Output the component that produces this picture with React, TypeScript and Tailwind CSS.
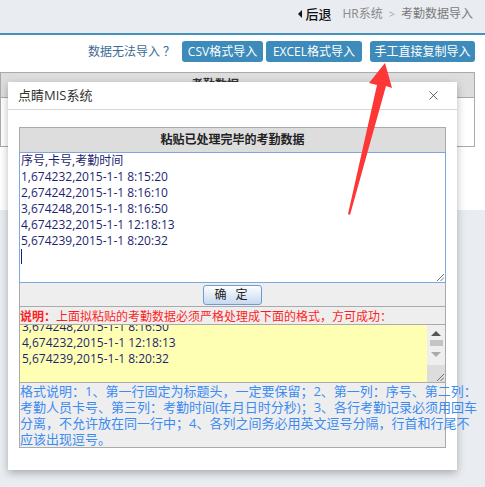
import { X } from 'lucide-react'

const font = { fontFamily: "'Open Sans', 'Noto Sans CJK SC', sans-serif" }

const pasted = [
  '序号,卡号,考勤时间',
  '1,674232,2015-1-1 8:15:20',
  '2,674242,2015-1-1 8:16:10',
  '3,674248,2015-1-1 8:16:50',
  '4,674232,2015-1-1 12:18:13',
  '5,674239,2015-1-1 8:20:32',
]

const sample = ['3,674248,2015-1-1 8:16:50', '4,674232,2015-1-1 12:18:13', '5,674239,2015-1-1 8:20:32']

const notes = [
  '格式说明：1、第一行固定为标题头，一定要保留；2、第一列：序号、第二列：',
  '考勤人员卡号、第三列：考勤时间(年月日时分秒)；3、各行考勤记录必须用回车',
  '分离，不允许放在同一行中；4、各列之间务必用英文逗号分隔，行首和行尾不',
  '应该出现逗号。',
]

function Grip() {
  return (
    <svg width="8" height="8" viewBox="0 0 8 8" className="absolute right-[1px] bottom-[1px]">
      <path d="M1 8 L8 1 M4.5 8 L8 4.5" stroke="#555" strokeWidth="0.8" />
    </svg>
  )
}

function ImportDialog() {
  return (
    <div className="absolute left-[8px] top-[82px] w-[449px] h-[388px] bg-white shadow-[0_3px_8px_rgba(0,0,0,0.28)]">
      {/* Title */}
      <div className="h-[28px] flex items-center justify-between pl-[10px] pr-[16px] border-b border-[#d6d6d6]">
        <span className="text-[13px] text-[#333]">点睛MIS系统</span>
        <X className="w-[15px] h-[15px] text-[#333]" strokeWidth={1.2} />
      </div>

      <div className="mt-[17px] ml-[11px] w-[427px] border border-[#aaa] bg-[#eee]">
        <div className="h-[24px] bg-[#ddd] flex items-center justify-center text-[12px] font-bold text-[#222]">
          粘贴已处理完毕的考勤数据
        </div>

        {/* Paste area */}
        <div className="relative -mx-px h-[131px] bg-white border border-[#7ea6e2] text-[12px] leading-[16px] text-[#1e1f70] pl-px">
          {pasted.map((l) => (
            <div key={l} className="whitespace-nowrap">{l}</div>
          ))}
          <div className="w-px h-[15px] bg-[#1e1f70]" />
          <Grip />
        </div>

        <div className="h-[24px] flex items-center justify-center border-b border-[#aaa]">
          <button className="w-[59px] h-[20px] rounded-[3px] border border-[#6f9ccf] bg-gradient-to-b from-[#fdfdfd] to-[#c6daf0] text-[12px] text-[#222] tracking-[3px]">
            确 定
          </button>
        </div>

        <div className="h-[17px] pt-[2px] text-[12px] leading-[15px] text-[#ff1e1e] whitespace-nowrap">
          <span className="font-bold">说明：</span>上面拟粘贴的考勤数据必须严格处理成下面的格式，方可成功：
        </div>

        {/* Sample area */}
        <div className="h-[59px] flex border-y border-[#aaa] overflow-hidden">
          <div className="flex-1 bg-[#ffffb4] text-[12px] leading-[16px] text-[#1e1f70] pl-[2px] overflow-hidden">
            <div className="-mt-[6px]">
              {sample.map((l) => (
                <div key={l} className="whitespace-nowrap">{l}</div>
              ))}
            </div>
          </div>
          <div className="relative w-[18px] bg-[#efefef] flex flex-col items-center pt-[6px]">
            <div className="w-0 h-0 border-x-[5px] border-x-transparent border-b-[5px] border-b-[#555]" />
            <div className="mt-[4px] w-[13px] h-[6px] bg-[#c4c4c4]" />
            <div className="mt-[6px] w-0 h-0 border-x-[5px] border-x-transparent border-t-[5px] border-t-[#aaa]" />
            <div className="absolute bottom-0 left-0 w-[18px] h-[17px] bg-[#ddd]">
              <Grip />
            </div>
          </div>
        </div>

        <div className="text-[13px] leading-[16px] text-[#3b8bf2]">
          {notes.map((l) => (
            <div key={l} className="whitespace-nowrap">{l}</div>
          ))}
        </div>
      </div>
    </div>
  )
}

export default function App() {
  return (
    <div className="relative w-[485px] h-[487px] overflow-hidden bg-[#e9ecf1]" style={font}>
      {/* Breadcrumb bar */}
      <div className="h-[35px] flex items-start justify-end pt-[6px] pr-[12px] border-b-2 border-[#4592bd] text-[12px] leading-[16px]">
        <span className="flex items-center text-[#111] text-[13px] font-medium">
          <span className="w-0 h-0 border-y-[4px] border-y-transparent border-r-[4px] border-r-[#111] mr-[3px]" />
          后退
        </span>
        <span className="ml-[11px] text-[#8a8a8a]">HR系统</span>
        <span className="mx-[6px] text-[#aaa] text-[11px]">&gt;</span>
        <span className="text-[#7a7a7a]">考勤数据导入</span>
      </div>

      <div className="bg-white h-[175px] pt-[6px]">
        <div className="flex items-center justify-end pr-[10px] text-[12px]">
          <span className="text-[#3e6b95] mr-[7px]">数据无法导入 ？</span>
          <button className="w-[81px] h-[21px] rounded-[3px] bg-[#3d8bbb] text-white">CSV格式导入</button>
          <button className="ml-[3px] w-[96px] h-[21px] rounded-[3px] bg-[#3d8bbb] text-white">EXCEL格式导入</button>
          <button className="ml-[8px] w-[105px] h-[21px] rounded-[3px] bg-[#3d8bbb] text-white">手工直接复制导入</button>
        </div>

        <div className="mt-[10px] mr-[10px] border border-[#aaa]">
          <div className="h-[25px] bg-[#ddd] border-b border-[#aaa] flex items-center pl-[190px] text-[12px] font-bold text-[#333]">
            考勤数据
          </div>
          <div className="h-[48px]" />
        </div>
      </div>

      <ImportDialog />

      <svg className="absolute inset-0 pointer-events-none" width="485" height="487" viewBox="0 0 485 487">
        <polygon points="385,63 392,88 386,86 350,215 348,214 377,85 369,83" fill="#fd3636" />
      </svg>
    </div>
  )
}
